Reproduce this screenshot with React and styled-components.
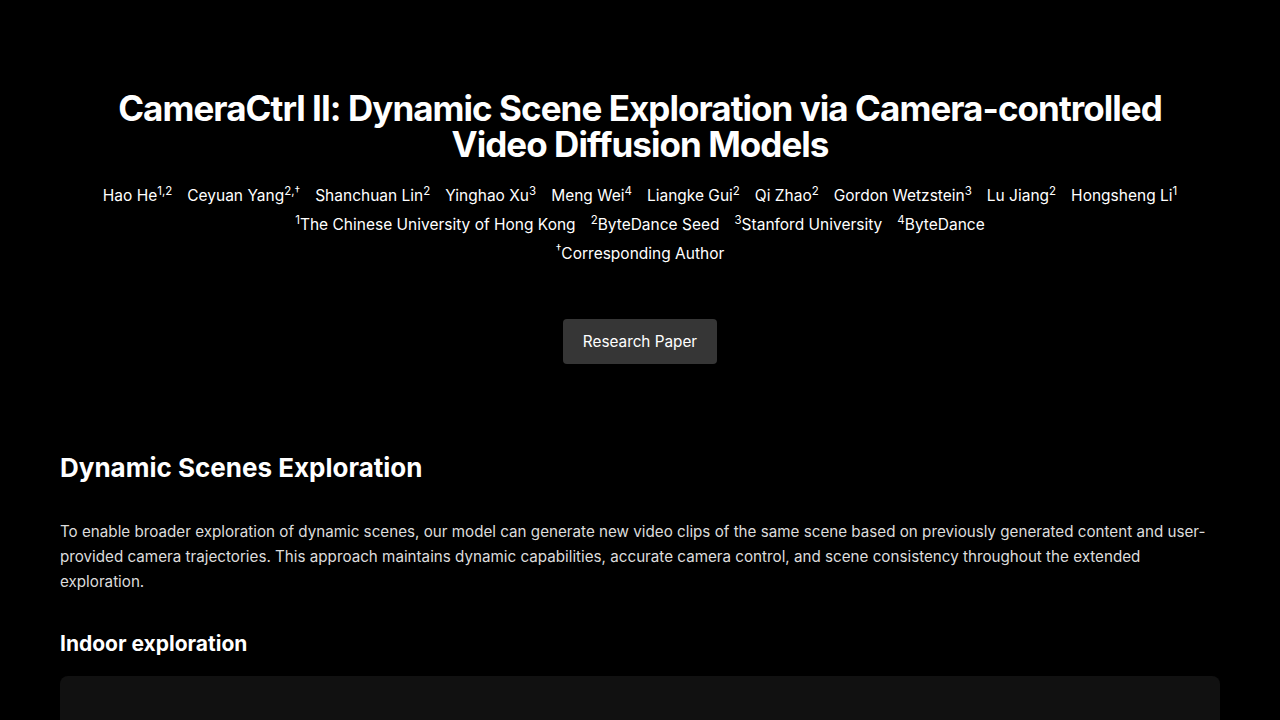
import React from "react";
import styled, { createGlobalStyle } from "styled-components";

const Global = createGlobalStyle`
  html, body { margin: 0; padding: 0; background: #000; }
  body { font-family: Inter, "Noto Sans", "Liberation Sans", sans-serif; color: #fff; }
  * { box-sizing: border-box; }
`;

const Page = styled.div`
  background: #000;
  min-height: 720px;
`;

const Header = styled.header`
  padding: 90px 60px 0;
  display: flex;
  flex-direction: column;
  align-items: center;
  text-align: center;
`;

const Title = styled.h1`
  margin: 0;
  font-size: 35px;
  line-height: 36px;
  font-weight: 700;
  letter-spacing: -0.95px;
  max-width: 1100px;
`;

const Authors = styled.div`
  margin-top: 19px;
  font-size: 15.5px;
  line-height: 29px;
  display: flex;
  flex-wrap: wrap;
  justify-content: center;
  column-gap: 15px;
`;

const InfoLine = styled.div`
  font-size: 15.5px;
  line-height: 29px;
  display: flex;
  justify-content: center;
  column-gap: 15px;
`;

const Sup = styled.sup`
  font-size: 11.5px;
  line-height: 0;
  vertical-align: 6px;
`;

const Button = styled.a`
  margin-top: 51px;
  display: inline-flex;
  align-items: center;
  justify-content: center;
  height: 45px;
  padding: 0 20px;
  background: #363636;
  border-radius: 4px;
  color: #fff;
  font-size: 15.3px;
  text-decoration: none;
`;

const Main = styled.main`
  padding: 87px 60px 0;
`;

const SectionTitle = styled.h2`
  margin: 0;
  font-size: 26px;
  line-height: 34px;
  font-weight: 700;
`;

const Paragraph = styled.p`
  margin: 34px 0 0;
  font-size: 15.2px;
  line-height: 25px;
  color: #dcdcdc;
`;

const SubTitle = styled.h3`
  margin: 36px 0 0;
  font-size: 21px;
  line-height: 28px;
  font-weight: 700;
`;

const Card = styled.div`
  margin-top: 18px;
  height: 200px;
  background: #111;
  border-radius: 8px;
`;

const authors = [
  ["Hao He", "1,2"],
  ["Ceyuan Yang", "2,†"],
  ["Shanchuan Lin", "2"],
  ["Yinghao Xu", "3"],
  ["Meng Wei", "4"],
  ["Liangke Gui", "2"],
  ["Qi Zhao", "2"],
  ["Gordon Wetzstein", "3"],
  ["Lu Jiang", "2"],
  ["Hongsheng Li", "1"],
];

const affils = [
  ["1", "The Chinese University of Hong Kong"],
  ["2", "ByteDance Seed"],
  ["3", "Stanford University"],
  ["4", "ByteDance"],
];

export default function App() {
  return (
    <Page>
      <Global />
      <Header>
        <Title>CameraCtrl II: Dynamic Scene Exploration via Camera-controlled Video Diffusion Models</Title>
        <Authors>
          {authors.map(([n, s]) => (
            <span key={n}>{n}<Sup>{s}</Sup></span>
          ))}
        </Authors>
        <InfoLine>
          {affils.map(([s, n]) => (
            <span key={n}><Sup>{s}</Sup>{n}</span>
          ))}
        </InfoLine>
        <InfoLine>
          <span><Sup>†</Sup>Corresponding Author</span>
        </InfoLine>
        <Button href="#">Research Paper</Button>
      </Header>
      <Main>
        <SectionTitle>Dynamic Scenes Exploration</SectionTitle>
        <Paragraph>
          To enable broader exploration of dynamic scenes, our model can generate new video clips of the same scene based on previously generated content and user-provided camera trajectories. This approach maintains dynamic capabilities, accurate camera control, and scene consistency throughout the extended exploration.
        </Paragraph>
        <SubTitle>Indoor exploration</SubTitle>
        <Card />
      </Main>
    </Page>
  );
}
